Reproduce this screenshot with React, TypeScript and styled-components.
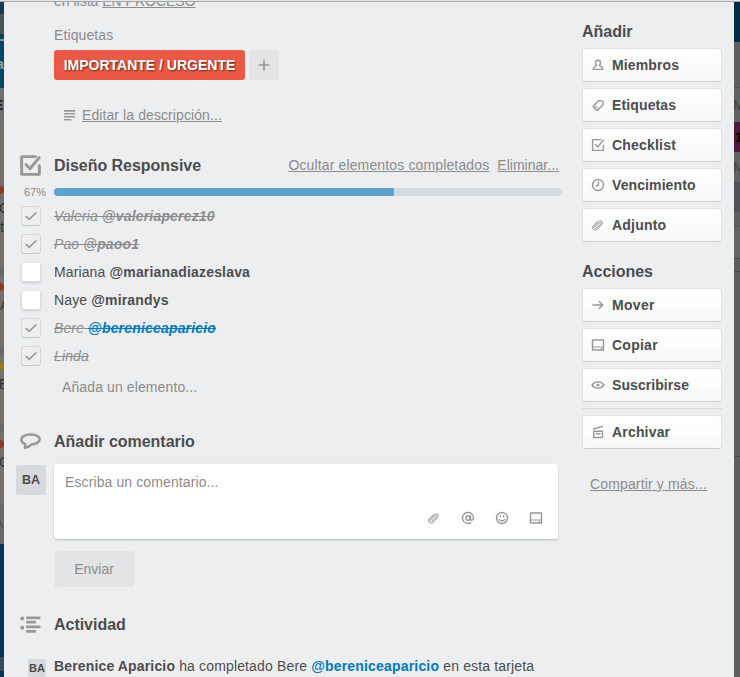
import React from "react";
import styled, { createGlobalStyle, css } from "styled-components";

const GlobalStyle = createGlobalStyle`
  html, body { margin: 0; padding: 0; }
  body { background: #edeef0; overflow: hidden; font-family: "Liberation Sans", Arial, sans-serif; font-size: 14px; color: #4d4d4d; }
  * { box-sizing: border-box; }
`;

const Page = styled.div`
  display: flex;
  flex-direction: column;
  width: 740px;
  height: 677px;
  overflow: hidden;
`;
const TopEdge = styled.div`
  flex: none;
  height: 2px;
  background: #e6e6e4;
  border-bottom: 1px solid #a6a8a6;
`;
const Stage = styled.div`
  display: flex;
  height: 675px;
`;
const Strip = styled.div<{ $w: number }>`
  flex: none;
  display: flex;
  flex-direction: column;
  width: ${(p) => p.$w}px;
  background: #74706e;
  overflow: hidden;
`;
const Block = styled.div<{ $h: number; $c: string; $text?: string; $bold?: boolean; $shift?: number }>`
  flex: none;
  height: ${(p) => p.$h}px;
  line-height: ${(p) => p.$h}px;
  background: ${(p) => p.$c};
  color: ${(p) => p.$text || "#333"};
  font-size: 14px;
  font-weight: ${(p) => (p.$bold ? 700 : 400)};
  text-indent: ${(p) => p.$shift || 0}px;
  white-space: nowrap;
`;
const Tag = styled(Block)`
  border-radius: 0 4px 4px 0;
`;

const Card = styled.div`
  display: flex;
  width: 730px;
  background: #edeef0;
`;
const Main = styled.div`
  flex: none;
  width: 578px;
  padding-left: 12px;
  overflow: hidden;
`;
const Row = styled.div<{ $h: number; $mt?: number }>`
  display: flex;
  align-items: center;
  height: ${(p) => p.$h}px;
  margin-top: ${(p) => p.$mt || 0}px;
  white-space: nowrap;
`;
const Gutter = styled.div<{ $pad?: number }>`
  flex: none;
  display: flex;
  width: 38px;
  padding-left: ${(p) => p.$pad ?? 4}px;
`;
const Muted = styled.span<{ $ls?: number }>`
  color: #8c8c8c;
  letter-spacing: ${(p) => p.$ls ?? 0.11}px;
`;
const Link = styled.a<{ $ls?: number }>`
  color: #8c8c8c;
  text-decoration: underline;
  letter-spacing: ${(p) => p.$ls ?? 0.14}px;
`;
const Title = styled.h3`
  margin: 2px 0 0;
  font-size: 16px;
  line-height: 20px;
  font-weight: 700;
  color: #4d4d4d;
  letter-spacing: -0.03px;
`;
const ClippedRow = styled.div`
  height: 12px;
  padding-left: 38px;
  overflow: hidden;
  span { display: block; line-height: 16px; margin-top: -9px; }
`;
const Label = styled.span`
  width: 191px;
  height: 30px;
  border-radius: 3px;
  background: #eb5a46;
  color: #fff;
  font-weight: 700;
  line-height: 30px;
  text-align: center;
  text-shadow: 1px 1px 2px rgba(0, 0, 0, 0.6);
`;
const AddLabel = styled.span`
  display: flex;
  align-items: center;
  justify-content: center;
  width: 30px;
  height: 30px;
  margin-left: 4px;
  border-radius: 3px;
  background: #e2e4e6;
`;
const Describe = styled.div`
  display: flex;
  align-items: center;
  gap: 6px;
  padding-left: 47px;
`;
const AddItem = styled.div`
  padding-left: 46px;
`;
const HeaderLinks = styled.div`
  display: flex;
  gap: 8px;
  margin-left: auto;
  padding-right: 23px;
`;
const Percent = styled.span`
  width: 38px;
  padding-left: 8px;
  font-size: 11px;
  line-height: 12px;
  color: #8c8c8c;
`;
const Track = styled.div`
  width: 508px;
  height: 8px;
  border-radius: 4px;
  background: #d6dadc;
  overflow: hidden;
`;
const Fill = styled.div`
  height: 8px;
  background: #5ba4cf;
`;
const CheckBox = styled.span<{ $done: boolean }>`
  display: flex;
  align-items: center;
  justify-content: center;
  width: 20px;
  height: 20px;
  margin-left: 1px;
  border-radius: 3px;
  ${(p) =>
    p.$done
      ? css`
          border: 1px solid #d6dadc;
          border-bottom-color: #c4c9cc;
        `
      : css`
          background: #fff;
          border: 1px solid #dcdfe1;
          border-top-color: #e4e6e7;
          box-shadow: 0 1px 2px #c4c9cc;
        `}
`;
const ItemText = styled.span<{ $done: boolean }>`
  letter-spacing: 0.12px;
  ${(p) =>
    p.$done &&
    css`
      color: #8c8c8c;
      font-style: italic;
      text-decoration: line-through;
    `}
`;
const Mention = styled.b<{ $me?: boolean }>`
  color: ${(p) => (p.$me ? "#0079bf" : "inherit")};
  letter-spacing: 0.18px;
  text-decoration: inherit;
`;
const CommentArea = styled.div`
  display: flex;
  align-items: flex-start;
  margin-top: 13px;
`;
const Avatar = styled.span<{ $s: number }>`
  flex: none;
  width: ${(p) => p.$s}px;
  height: ${(p) => p.$s}px;
  margin-top: ${(p) => (p.$s > 20 ? 1 : 0)}px;
  border-radius: 3px;
  background: #d6dadc;
  color: #4d4d4d;
  font-weight: 700;
  font-size: ${(p) => (p.$s > 20 ? 12.5 : 11)}px;
  line-height: ${(p) => p.$s}px;
  text-align: center;
`;
const CommentBox = styled.div`
  display: flex;
  flex-direction: column;
  justify-content: space-between;
  width: 504px;
  height: 75px;
  margin-left: 8px;
  padding: 9px 15px 14px 11px;
  border-radius: 3px;
  background: #fff;
  box-shadow: 0 1px 2px #b6bbbf;
  line-height: 18px;
`;
const Tools = styled.div`
  display: flex;
  justify-content: flex-end;
  gap: 20px;
`;
const Send = styled.button`
  display: block;
  width: 80px;
  height: 36px;
  margin: 12px 0 0 38px;
  padding: 0;
  border: 0;
  border-radius: 3px;
  background: #e2e4e6;
  color: #8c8c8c;
  font: 14px "Liberation Sans", Arial, sans-serif;
`;
const ActivityText = styled.span`
  padding-bottom: 4px;
  letter-spacing: 0.15px;
`;
const Side = styled.div`
  width: 152px;
  padding: 20px 12px 0 0;
`;
const SideButton = styled.button`
  display: flex;
  align-items: center;
  gap: 7px;
  width: 140px;
  height: 34px;
  margin-bottom: 6px;
  padding: 0 0 0 8px;
  border: 1px solid #dfe1e3;
  border-bottom-color: #cbcfd2;
  border-radius: 3px;
  background: linear-gradient(#fff, #f7f9f8);
  color: #4d4d4d;
  font: 700 14px "Liberation Sans", Arial, sans-serif;
  white-space: nowrap;
`;
const ButtonText = styled.span<{ $ls: number }>`
  letter-spacing: ${(p) => p.$ls}px;
`;
const SideTitle = styled(Title)<{ $mt: number }>`
  margin: ${(p) => p.$mt}px 0 6px;
`;
const Divider = styled.div`
  width: 140px;
  height: 1px;
  margin-bottom: 6px;
  background: #d3d7d9;
`;
const Share = styled.div`
  margin-top: 27px;
  padding-left: 8px;
  line-height: 16px;
  white-space: nowrap;
`;

type IconName = "user" | "tag" | "check" | "clock" | "clip" | "arrow" | "card" | "eye" | "archive" | "at" | "smile" | "lines" | "bubble" | "list" | "tick" | "plus";

const drawings: Record<IconName, React.ReactNode> = {
  user: <path d="M5.700 7.400C4.800 6.700 4.500 5.600 4.500 4.600 4.500 3 5.500 2.300 7 2.300s2.500.7 2.500 2.300c0 1-.3 2.100-1.200 2.800L9.400 8.200c1.400.4 2.300 1 2.500 3.200H2.100c.2-2.200 1.100-2.800 2.500-3.200z" />,
  tag: (
    <>
      <path d="M2.300 8L7.600 2.800l3.600.1 1 1-.2 3L6.800 12c-.4.400-.8.400-1.200 0L2.300 9c-.3-.3-.3-.7 0-1z" />
      <path d="M3.700 6.900l3.800 3.800" strokeWidth=".8" />
      <circle cx="4.600" cy="9.200" r=".7" fill="currentColor" stroke="none" />
    </>
  ),
  check: (
    <>
      <path d="M10 1.600H1.600v10.800h10.800V7.200" />
      <path d="M4.300 6.500L6.700 9l5.600-6.800" />
    </>
  ),
  clock: (
    <>
      <circle cx="7" cy="7" r="5.500" />
      <path d="M7.500 3.600v3.600L5.200 8.300" />
    </>
  ),
  clip: <path d="M4.600 8.800l4-4.100c1.100-1 2.200.1 1.200 1.200L5.700 10c-1.700 1.600-3.800-.3-2.200-2.100l4.200-4.300c2.400-2.200 5.200.4 3.200 2.800l-4.700 4.900c-1.700 1.500-4.100 1.300-4.700-.9-.2-1 .2-1.900.8-2.500L7 3.100" strokeWidth="1" />,
  arrow: <path d="M1.800 7h10M8.200 3.400L11.800 7l-3.600 3.600" />,
  card: (
    <>
      <path d="M1.500 2h11v10h-11z" />
      <path d="M1.500 9h11" strokeWidth="1.100" />
      <path d="M10 10.600h.8" strokeWidth="1" />
    </>
  ),
  eye: (
    <>
      <path d="M1 7c2.800-4.200 9.200-4.200 12 0-2.800 4.200-9.200 4.200-12 0z" />
      <circle cx="7" cy="7" r="1.600" fill="currentColor" stroke="none" />
    </>
  ),
  archive: (
    <>
      <path d="M2.600 4l8.800-2.600M2.700 6.200h8.800v6.300H2.700z" />
      <path d="M5.200 8.800h3.800" />
    </>
  ),
  at: (
    <>
      <circle cx="7" cy="7" r="2.200" />
      <path d="M9.400 4.700v3.500c0 1.500 3.100 1.400 3.100-1.200a5.500 5.500 0 1 0-2.700 4.700" />
    </>
  ),
  smile: (
    <>
      <circle cx="7" cy="7" r="5.500" />
      <path d="M4.300 8.400c.8 1.900 4.600 1.900 5.400 0M5.400 4.700v1M8.600 4.700v1" />
    </>
  ),
  lines: <path d="M1 2h12M1 5.200h12M1 8.400h12M1 11.600h8" strokeLinecap="butt" />,
  bubble: <path d="M4.700 16l.4-3.400C2.700 11.600 1.300 10.100 1.300 8.300c0-2.900 3.800-5 8.700-5s8.700 1.900 8.700 4.600-3.500 4.800-8 5C9.200 14.400 7.100 15.400 4.700 16z" />,
  list: (
    <>
      <path d="M6.900 3.600h11.500M6.900 7.800h7.200M6.900 12.200h11.500M6.900 16.600h7.200" />
      <circle cx="2.200" cy="4.300" r="1.900" fill="currentColor" stroke="none" />
      <circle cx="2.200" cy="13.100" r="1.900" fill="currentColor" stroke="none" />
    </>
  ),
  tick: <path d="M2 7.400L5.200 10.400 12 3.800" />,
  plus: <path d="M7 1.500v11M1.500 7h11" strokeLinecap="butt" />,
};

const Svg = styled.svg`
  flex: none;
  display: block;
  color: #999;
  fill: none;
  stroke: currentColor;
  stroke-linecap: round;
  stroke-linejoin: round;
`;

function Icon({ name, size = 14, box = 14, weight = 1.4 }: { name: IconName; size?: number; box?: number; weight?: number }) {
  return (
    <Svg width={size} height={size} viewBox={`0 0 ${box} ${box}`} strokeWidth={weight}>
      {drawings[name]}
    </Svg>
  );
}

const items = [
  { name: "Valeria", user: "@valeriaperez10", done: true },
  { name: "Pao", user: "@paoo1", done: true },
  { name: "Mariana", user: "@marianadiazeslava", done: false },
  { name: "Naye", user: "@mirandys", done: false },
  { name: "Bere", user: "@bereniceaparicio", done: true, me: true },
  { name: "Linda", user: "", done: true },
];

const Action = ({ icon, text, ls = 0.13 }: { icon: IconName; text: string; ls?: number }) => (
  <SideButton>
    <Icon name={icon} size={14} />
    <ButtonText $ls={ls}>{text}</ButtonText>
  </SideButton>
);

export default function App() {
  return (
    <Page>
      <GlobalStyle />
      <TopEdge />
      <Stage>
        <Strip $w={4}>
          <Block $h={12} $c="#123e58" />
          <Block $h={20} $c="#4b5356" />
          <Block $h={5} $c="#024265" />
          <Block $h={2} $c="#83939b" />
          <Block $h={47} $c="#024669" $text="#9aa5aa" $bold $shift={-4}>a</Block>
          <Block $h={34} $c="#6f6f70" $text="#222" $bold $shift={-6}>E</Block>
          <Block $h={64} $c="#74706e" />
          <Tag $h={8} $c="#93372b" />
          <Block $h={28} $c="#74706e" $shift={-1}>C</Block>
          <Block $h={10} $c="#74706e">t</Block>
          <Block $h={35} $c="#74706e" />
          <Block $h={9} $c="#686a6c" />
          <Block $h={7} $c="#74706e" />
          <Tag $h={8} $c="#93372b" />
          <Block $h={28} $c="#74706e">A</Block>
          <Block $h={28} $c="#74706e" />
          <Block $h={7} $c="#686a6c" />
          <Block $h={8} $c="#74706e" />
          <Tag $h={8} $c="#8c830c" />
          <Block $h={28} $c="#74706e" $shift={-1}>E</Block>
          <Block $h={27} $c="#74706e" />
          <Block $h={7} $c="#686a6c" />
          <Block $h={8} $c="#74706e" />
          <Tag $h={8} $c="#93372b" />
          <Block $h={28} $c="#74706e" $shift={-1}>C</Block>
          <Block $h={27} $c="#74706e" />
          <Block $h={41} $c="#696a6b" $text="#505050" $shift={-6}>A</Block>
          <Block $h={113} $c="#023653" />
          <Block $h={14} $c="#304d59" />
          <Block $h={8} $c="#023653" />
        </Strip>
        <Card>
          <Main>
            <ClippedRow><Muted $ls={0}>en lista <Link $ls={0}>EN PROCESO</Link></Muted></ClippedRow>
            <Row $h={18} $mt={12}><Gutter /><Muted>Etiquetas</Muted></Row>
            <Row $h={30} $mt={6}>
              <Gutter />
              <Label>IMPORTANTE / URGENTE</Label>
              <AddLabel><Icon name="plus" size={14} weight={1.6} /></AddLabel>
            </Row>
            <Row $h={20} $mt={25}>
              <Describe>
                <Icon name="lines" size={13} weight={1.7} />
                <Link $ls={0.09}>Editar la descripción...</Link>
              </Describe>
            </Row>
            <Row $h={22} $mt={29}>
              <Gutter $pad={3}><Icon name="check" size={23} weight={1.8} /></Gutter>
              <Title>Diseño Responsive</Title>
              <HeaderLinks>
                <Link>Ocultar elementos completados</Link>
                <Link $ls={0.02}>Eliminar...</Link>
              </HeaderLinks>
            </Row>
            <Row $h={12} $mt={10}>
              <Percent>67%</Percent>
              <Track><Fill style={{ width: "67%" }} /></Track>
            </Row>
            <Row $h={4} />
            {items.map((item) => (
              <Row $h={28} key={item.name}>
                <Gutter>
                  <CheckBox $done={item.done}>{item.done && <Icon name="tick" weight={1.5} />}</CheckBox>
                </Gutter>
                <ItemText $done={item.done}>
                  {item.name}{item.user && " "}
                  <Mention $me={item.me}>{item.user}</Mention>
                </ItemText>
              </Row>
            ))}
            <Row $h={20} $mt={7}><AddItem><Muted>Añada un elemento...</Muted></AddItem></Row>
            <Row $h={20} $mt={34}>
              <Gutter><Icon name="bubble" size={21} box={20} weight={2.4} /></Gutter>
              <Title>Añadir comentario</Title>
            </Row>
            <CommentArea>
              <Avatar $s={30}>BA</Avatar>
              <CommentBox>
                <Muted>Escriba un comentario...</Muted>
                <Tools>
                  <Icon name="clip" /><Icon name="at" /><Icon name="smile" /><Icon name="card" />
                </Tools>
              </CommentBox>
            </CommentArea>
            <Send>Enviar</Send>
            <Row $h={20} $mt={27}>
              <Gutter><Icon name="list" size={21} box={20} weight={2.6} /></Gutter>
              <Title>Actividad</Title>
            </Row>
            <Row $h={18} $mt={25}>
              <Gutter $pad={12}><Avatar $s={18}>BA</Avatar></Gutter>
              <ActivityText><b>Berenice Aparicio</b> ha completado Bere <Mention $me>@bereniceaparicio</Mention> en esta tarjeta</ActivityText>
            </Row>
          </Main>
          <Side>
            <SideTitle $mt={0}>Añadir</SideTitle>
            <Action icon="user" text="Miembros" />
            <Action icon="tag" text="Etiquetas" />
            <Action icon="check" text="Checklist" ls={0.2} />
            <Action icon="clock" text="Vencimiento" ls={0.1} />
            <Action icon="clip" text="Adjunto" ls={0.2} />
            <SideTitle $mt={20}>Acciones</SideTitle>
            <Action icon="arrow" text="Mover" ls={0.3} />
            <Action icon="card" text="Copiar" ls={0.25} />
            <Action icon="eye" text="Suscribirse" ls={0.07} />
            <Divider />
            <Action icon="archive" text="Archivar" ls={0.18} />
            <Share><Link>Compartir y más...</Link></Share>
          </Side>
        </Card>
        <Strip $w={6}>
          <Block $h={40} $c="#022b45" />
          <Block $h={45} $c="#5c5f5f" />
          <Block $h={1} $c="#505354" />
          <Block $h={34} $c="#606363" $text="#414444" $shift={-1}>M</Block>
          <Block $h={30} $c="#4c193f" $text="#050505" $bold $shift={1}>1</Block>
          <Block $h={30} $c="#606363" $text="#414444" $shift={-1}>M</Block>
          <Block $h={30} $c="#515557" />
          <Block $h={14} $c="#5c5f5f" />
          <Block $h={1} $c="#505354" />
          <Block $h={31} $c="#626565" />
          <Block $h={1} $c="#484b4c" />
          <Block $h={12} $c="#5c5f5f" />
          <Block $h={1} $c="#484b4c" />
          <Block $h={184} $c="#5c5f5f" />
          <Block $h={1} $c="#484b4c" />
          <Block $h={220} $c="#5c5f5f" />
        </Strip>
      </Stage>
    </Page>
  );
}
